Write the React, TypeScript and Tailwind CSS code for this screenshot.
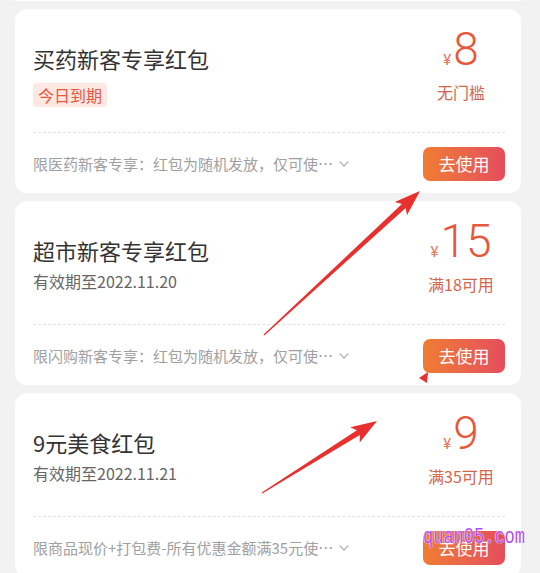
import React from 'react';

type Coupon = {
  id: string;
  title: string;
  badge?: string;
  expire?: string;
  amount: string;
  rule: string;
  desc: string;
};

const coupons: Coupon[] = [
  { id: 'c1', title: '买药新客专享红包', badge: '今日到期', amount: '8', rule: '无门槛', desc: '限医药新客专享：红包为随机发放，仅可使…' },
  { id: 'c2', title: '超市新客专享红包', expire: '有效期至2022.11.20', amount: '15', rule: '满18可用', desc: '限闪购新客专享：红包为随机发放，仅可使…' },
  { id: 'c3', title: '9元美食红包', expire: '有效期至2022.11.21', amount: '9', rule: '满35可用', desc: '限商品现价+打包费-所有优惠金额满35元使…' },
];

const cjk = "font-['Noto_Sans_CJK_SC','Noto_Sans',sans-serif]";

function Chevron() {
  return (
    <svg width="10" height="6" viewBox="0 0 10 6" className="ml-[6px] shrink-0">
      <path d="M1 1l4 4 4-4" fill="none" stroke="#b5b5b5" strokeWidth="1.4" strokeLinecap="round" strokeLinejoin="round" />
    </svg>
  );
}

function CouponCard({ coupon }: { coupon: Coupon }) {
  return (
    <div className="ml-[15px] w-[506px] h-[184px] rounded-[12px] bg-white pl-[18px] pr-[16px] flex flex-col">
      <div className="h-[123px] flex justify-between">
        <div className="pt-[34px] flex flex-col items-start">
          <div className="text-[22px] leading-[30px] text-[#333]">{coupon.title}</div>
          {coupon.badge && (
            <div className="mt-[10px] h-[24px] px-[5px] rounded-[3px] bg-[#fde8e3] text-[#e8573f] text-[16px] leading-[24px]">
              {coupon.badge}
            </div>
          )}
          {coupon.expire && (
            <div className="mt-[4px] text-[16px] leading-[24px] text-[#666]">{coupon.expire}</div>
          )}
        </div>
        <div className="w-[88px] pt-[17px] flex flex-col items-center">
          <div className="flex items-baseline text-[#e6583b]">
            <span className="text-[15px] mr-[2px] text-[#e9765c] font-['Roboto',sans-serif]">¥</span>
            <span className="text-[46px] leading-none font-light font-['Roboto',sans-serif]">{coupon.amount}</span>
          </div>
          <div className="mt-[8px] text-[16px] leading-[24px] text-[#d2654a] whitespace-nowrap">{coupon.rule}</div>
        </div>
      </div>
      <div className="border-t border-dashed border-[#e0e0e0]" />
      <div className="flex-1 flex items-center justify-between pb-[12px] pt-[14px]">
        <div className="flex items-center text-[15px] text-[#a0a0a0] whitespace-nowrap">
          <span>{coupon.desc}</span>
          <Chevron />
        </div>
        <button className="w-[82px] h-[34px] rounded-[7px] bg-gradient-to-r from-[#f07c2f] to-[#e44d5b] text-white text-[17px]">
          去使用
        </button>
      </div>
    </div>
  );
}

function arrowPoints(tx: number, ty: number, px: number, py: number) {
  const dx = px - tx;
  const dy = py - ty;
  const len = Math.hypot(dx, dy);
  const ux = dx / len;
  const uy = dy / len;
  const nx = -uy;
  const ny = ux;
  const head = 22;
  const bx = px - ux * head;
  const by = py - uy * head;
  const wx = px - ux * (head + 4);
  const wy = py - uy * (head + 4);
  const p = (x: number, y: number) => `${x.toFixed(1)},${y.toFixed(1)}`;
  return [
    p(tx + nx * 0.6, ty + ny * 0.6),
    p(bx + nx * 2.8, by + ny * 2.8),
    p(wx + nx * 9, wy + ny * 9),
    p(px, py),
    p(wx - nx * 9, wy - ny * 9),
    p(bx - nx * 2.8, by - ny * 2.8),
    p(tx - nx * 0.6, ty - ny * 0.6),
  ].join(' ');
}

export default function App() {
  return (
    <div className={`relative w-[540px] h-[573px] overflow-hidden bg-[#f2f2f2] ${cjk}`}>
      <div className="flex flex-col gap-[8px]">
        <div className="ml-[15px] w-[506px] h-[1px] bg-white" />
        {coupons.map((c) => (
          <CouponCard key={c.id} coupon={c} />
        ))}
      </div>

      <svg className="absolute inset-0 pointer-events-none" width="540" height="573" viewBox="0 0 540 573">
        <polygon points={arrowPoints(264, 335, 420, 191)} fill="#e8302e" />
        <polygon points={arrowPoints(262, 493, 377, 421)} fill="#e8302e" />
        <polygon points="419,378 428,372 427,383" fill="#e8302e" />
      </svg>

      <div className="absolute left-[423px] top-[524px] text-[17px] leading-[20px] text-[#b24cf4] font-['Liberation_Mono',monospace] scale-y-[1.35] origin-top [text-shadow:0_0_1px_#fff,0_0_1px_#fff]">
        quan05.com
      </div>
    </div>
  );
}
